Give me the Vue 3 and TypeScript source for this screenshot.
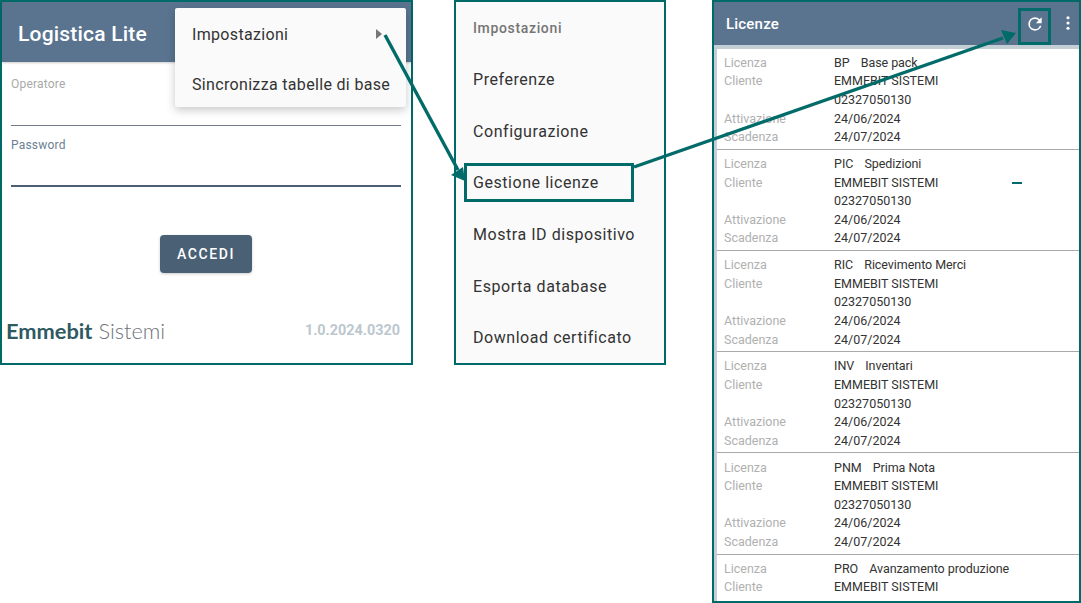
<script setup lang="ts">
interface Licence { code: string; name: string }
const licences: Licence[] = [
  { code: 'BP', name: 'Base pack' },
  { code: 'PIC', name: 'Spedizioni' },
  { code: 'RIC', name: 'Ricevimento Merci' },
  { code: 'INV', name: 'Inventari' },
  { code: 'PNM', name: 'Prima Nota' },
  { code: 'PRO', name: 'Avanzamento produzione' },
]
const settings = ['Preferenze', 'Configurazione', 'Gestione licenze', 'Mostra ID dispositivo', 'Esporta database', 'Download certificato']
</script>

<template>
  <div class="page">
    <section class="login">
      <header class="login-bar"><h1>Logistica Lite</h1></header>
      <div class="menu">
        <div class="menu-item"><span>Impostazioni</span><i class="caret"></i></div>
        <div class="menu-item"><span>Sincronizza tabelle di base</span></div>
      </div>
      <div class="form">
        <div class="field"><label class="faint">Operatore</label><div class="line"></div></div>
        <div class="field second"><label>Password</label><div class="line strong"></div></div>
        <button class="accedi">ACCEDI</button>
        <div class="foot">
          <span class="brand"><b>Emmebit</b> Sistemi</span>
          <span class="version">1.0.2024.0320</span>
        </div>
      </div>
    </section>

    <section class="settings">
      <div class="set-title">Impostazioni</div>
      <div v-for="s in settings" :key="s" class="set-item">{{ s }}</div>
    </section>

    <section class="licences">
      <header class="lic-bar">
        <h2>Licenze</h2>
        <svg class="refresh" viewBox="0 0 24 24" width="20" height="20"><path fill="#fff" d="M17.65 6.35A7.96 7.96 0 0 0 12 4a8 8 0 1 0 7.73 10h-2.08A6 6 0 1 1 12 6c1.66 0 3.14.69 4.22 1.78L13 11h7V4l-2.35 2.35z"/></svg>
        <svg class="dots" viewBox="0 0 4 16" width="4" height="14"><circle cx="2" cy="2" r="1.8" fill="#fff"/><circle cx="2" cy="8" r="1.8" fill="#fff"/><circle cx="2" cy="14" r="1.8" fill="#fff"/></svg>
      </header>
      <div class="list">
        <article v-for="l in licences" :key="l.code" class="card">
          <div class="k">Licenza</div><div class="v"><span class="code">{{ l.code }}</span><span class="name">{{ l.name }}</span></div>
          <div class="k">Cliente</div><div class="v">EMMEBIT SISTEMI</div>
          <div class="k"></div><div class="v">02327050130</div>
          <div class="k">Attivazione</div><div class="v">24/06/2024</div>
          <div class="k">Scadenza</div><div class="v">24/07/2024</div>
        </article>
      </div>
    </section>

    <svg class="notes" width="1081" height="603" viewBox="0 0 1081 603">
      <g fill="none" stroke="#006b68" stroke-width="3">
        <rect x="465.5" y="164.5" width="167" height="36"/>
        <rect x="1019.5" y="9.5" width="30" height="34"/>
        <path stroke-width="3.4" d="M385 35 L458 170"/>
        <path stroke-width="3.4" d="M634 167 L1003 38"/>
      </g>
      <path fill="#006b68" d="M465 181 L451 175 L463 167Z"/>
      <path fill="#006b68" d="M1016 33 L1007 44 L1001 30Z"/>
      <rect x="1012" y="182" width="10" height="2" fill="#006b68"/>
    </svg>
  </div>
</template>

<style>
html, body { margin: 0; background: #fff; overflow: hidden; }
</style>

<style scoped>
.page {
  position: relative;
  width: 1081px;
  height: 603px;
  overflow: hidden;
  display: flex;
  align-items: flex-start;
  font-family: Roboto, "Liberation Sans", sans-serif;
  background: #fff;
}
.login {
  position: relative;
  box-sizing: border-box;
  width: 413px;
  height: 365px;
  border: 2px solid #006a68;
  background: #fff;
}
.login-bar {
  height: 60px;
  background: #5a7490;
  display: flex;
  align-items: center;
  padding: 4px 0 0 16px;
  box-sizing: border-box;
  box-shadow: 0 1px 2px rgba(0, 0, 0, .2);
}
.login-bar h1 {
  margin: 0;
  color: #fff;
  font-size: 21px;
  font-weight: 500;
  letter-spacing: .2px;
}
.menu {
  position: absolute;
  left: 173px;
  top: 6px;
  width: 231px;
  height: 99px;
  background: #fafafa;
  border-radius: 2px;
  box-shadow: 0 3px 10px rgba(0, 0, 0, .22);
  display: flex;
  flex-direction: column;
}
.menu-item {
  flex: 1;
  display: flex;
  align-items: center;
  justify-content: space-between;
  padding: 4px 16px 0 17px;
  font-size: 16px;
  color: #333;
  letter-spacing: .33px;
  white-space: nowrap;
}
.caret {
  width: 0;
  height: 0;
  margin-right: 8px;
  margin-top: -2px;
  border-left: 6px solid #777;
  border-top: 5px solid transparent;
  border-bottom: 5px solid transparent;
}
.form { padding: 14px 10px 0 9px; }
.field label {
  display: block;
  font-size: 12px;
  line-height: 16px;
  color: #6b7f92;
  letter-spacing: .2px;
}
.field label.faint { color: #a9a9a9; }
.line { margin-top: 33px; height: 1px; background: #6f7a84; }
.line.strong { margin-top: 32px; height: 2px; background: #4a5f75; }
.second { margin-top: 11px; }
.accedi {
  display: block;
  box-sizing: border-box;
  margin: 48px auto 0 149px;
  width: 92px;
  height: 38px;
  border: 0;
  border-radius: 4px;
  background: #4a6075;
  color: #fff;
  font: 500 14px Roboto, sans-serif;
  letter-spacing: 1.6px;
  box-shadow: 0 1px 3px rgba(0, 0, 0, .2);
}
.foot {
  margin: 44px 1px 0 -5px;
  display: flex;
  justify-content: space-between;
  align-items: center;
}
.brand {
  font-family: Lato, sans-serif;
  font-size: 21.8px;
  font-weight: 300;
  color: #6d7378;
}
.brand b { font-weight: 700; color: #2f5a62; }
.version { font-size: 14.4px; font-weight: 700; color: #bcc7ce; }

.settings {
  box-sizing: border-box;
  width: 212px;
  height: 365px;
  margin-left: 41px;
  border: 2px solid #006a68;
  background: #fafafa;
  padding: 0 17px;
}
.set-title {
  height: 52px;
  line-height: 52px;
  font-size: 14px;
  font-weight: 500;
  color: #757575;
  letter-spacing: .65px;
}
.set-item {
  height: 51.7px;
  line-height: 51.7px;
  font-size: 16px;
  color: #333;
  letter-spacing: .55px;
  white-space: nowrap;
}

.licences {
  box-sizing: border-box;
  width: 369px;
  height: 603px;
  margin-left: 46px;
  border: 2px solid #006a68;
  background: #c4ced5;
  overflow: hidden;
}
.lic-bar {
  height: 43px;
  background: #5a7490;
  display: flex;
  align-items: center;
  padding-left: 12px;
}
.lic-bar h2 {
  margin: 0;
  flex: 1;
  color: #fff;
  font-size: 15px;
  font-weight: 500;
  letter-spacing: .2px;
}
.refresh { margin-right: 21px; margin-top: 0; }
.dots { margin-right: 9px; margin-top: -1px; }
.list { margin: 3.6px 0 0 3px; background: #fff; }
.card {
  box-sizing: border-box;
  height: 101.2px;
  padding: 5.2px 0 0 7px;
  display: grid;
  grid-template-columns: 110px 1fr;
  grid-auto-rows: 18.6px;
  font-size: 12.5px;
  line-height: 18.6px;
  border-bottom: 1px solid #a9a9a9;
  white-space: nowrap;
}
.k { color: #b0b0b0; }
.v { color: #333; }
.code { margin-right: 11px; }
.name { letter-spacing: -.06px; }
.notes { position: absolute; left: 0; top: 0; pointer-events: none; }
</style>
